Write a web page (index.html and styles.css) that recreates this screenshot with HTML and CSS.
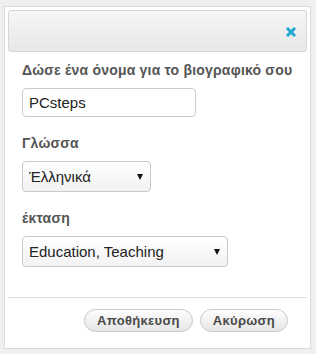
FILE: index.html
```html
<!DOCTYPE html>
<html lang="el">
<head>
  <meta charset="UTF-8">
  <title>Βιογραφικό</title>
  <link rel="stylesheet" href="styles.css">
</head>
<body>
  <div class="dialog">
    <div class="dialog-head">
      <button class="close" title="Κλείσιμο">
        <svg width="10" height="10" viewBox="0 0 10 10"><path d="M2 2 L8 8 M8 2 L2 8" stroke="#22a7cf" stroke-width="3" stroke-linecap="square"/></svg>
      </button>
    </div>
    <div class="dialog-body">
      <div class="field">
        <label>Δώσε ένα όνομα για το βιογραφικό σου</label>
        <input class="text" type="text" value="PCsteps">
      </div>
      <div class="field">
        <label>Γλώσσα</label>
        <div class="select short">
          <select><option>Έλληνικά</option><option>English</option></select>
        </div>
      </div>
      <div class="field">
        <label>έκταση</label>
        <div class="select long">
          <select><option>Education, Teaching</option></select>
        </div>
      </div>
    </div>
    <div class="dialog-foot">
      <button class="btn">Αποθήκευση</button>
      <button class="btn">Ακύρωση</button>
    </div>
  </div>
</body>
</html>
```

FILE: styles.css
```css
body { margin:0; background:#efefef; font-family:'Liberation Sans', Arial, sans-serif; }
.dialog { margin:6px 0 0 4px; width:299px; background:#fff; border:1px solid #dcdcdc; padding:3px 3px 16px; }
.dialog-head { height:40px; border:1px solid #d6d6d6; border-radius:3px; background:linear-gradient(#f6f6f6, #e7e7e7); display:flex; align-items:center; justify-content:flex-end; padding-right:9px; }
.close { background:none; border:none; padding:0; width:12px; height:12px; display:flex; align-items:center; justify-content:center; cursor:pointer; margin-top:2px; }
.dialog-body { padding:10px 14px 12px; }
.field { margin-bottom:18px; }
.field label { display:block; font-size:14px; font-weight:bold; color:#555; line-height:17px; margin-bottom:9px; letter-spacing:.2px; }
.text { width:174px; height:29px; box-sizing:border-box; border:1px solid #ccc; border-radius:4px; padding:0 6px; font-family:inherit; font-size:15px; color:#222; background:#fff; }
.select { position:relative; }
.select.short { width:129px; }
.select.long { width:206px; }
.select select { -webkit-appearance:none; appearance:none; width:100%; height:31px; box-sizing:border-box; border:1px solid #c9c9c9; border-radius:4px; padding:0 6px; font-family:inherit; font-size:15px; color:#222; background:linear-gradient(#fff, #f2f2f2); }
.select::after { content:''; position:absolute; right:8px; top:13px; border-left:3.5px solid transparent; border-right:3.5px solid transparent; border-top:6px solid #111; pointer-events:none; }
.dialog-foot { border-top:1px solid #dedede; padding:11px 19px 0 0; display:flex; justify-content:flex-end; gap:7px; }
.btn { height:23px; padding:0 12px; border:1px solid #c8c8c8; border-radius:12px; background:linear-gradient(#fdfdfd, #e6e6e6); font-family:inherit; font-size:13px; font-weight:bold; color:#4a4a4a; letter-spacing:.3px; cursor:pointer; }
```
